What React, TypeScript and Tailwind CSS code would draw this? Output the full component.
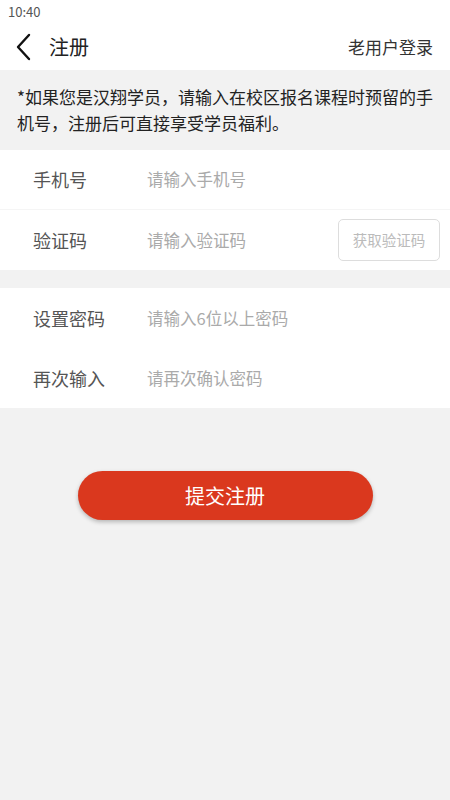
import React from "react";

const font = { fontFamily: '"Noto Sans CJK SC", "Noto Sans", sans-serif' };

const Row = ({
  label,
  placeholder,
  children,
  border,
}: {
  label: string;
  placeholder: string;
  children?: React.ReactNode;
  border?: boolean;
}) => (
  <div
    className={`flex items-center h-[60px] bg-white pl-[33px] pr-[10px] ${
      border ? "border-b border-[#f5f5f5]" : ""
    }`}
  >
    <span className="w-[114px] shrink-0 text-[18px] text-[#555]">{label}</span>
    <input
      className="flex-1 min-w-0 outline-none text-[16.5px] placeholder:text-[#aaa] bg-transparent"
      placeholder={placeholder}
      style={font}
    />
    {children}
  </div>
);

export default function App() {
  return (
    <div className="w-[450px] h-[800px] bg-[#f2f2f2] flex flex-col" style={font}>
      <div className="bg-white h-[24px] flex items-center pl-[8px] text-[13px] text-[#555]">
        10:40
      </div>
      <div className="bg-white h-[46px] flex items-center justify-between pl-[14px] pr-[17px]">
        <div className="flex items-center">
          <svg width="20" height="28" viewBox="0 0 20 28" fill="none">
            <path d="M15 2 L4 14 L15 26" stroke="#111" strokeWidth="2.4" strokeLinecap="round" strokeLinejoin="round" />
          </svg>
          <span className="ml-[15px] text-[20px] text-[#222]">注册</span>
        </div>
        <span className="text-[17px] text-[#333]">老用户登录</span>
      </div>
      <div className="h-[80px] pl-[17px] pr-[10px] pt-[14px] text-[17px] leading-[26px] text-[#222]">
        *如果您是汉翔学员，请输入在校区报名课程时预留的手机号，注册后可直接享受学员福利。
      </div>
      <Row label="手机号" placeholder="请输入手机号" border />
      <Row label="验证码" placeholder="请输入验证码">
        <button className="w-[102px] h-[42px] shrink-0 border border-[#ddd] rounded-[5px] text-[14.5px] text-[#bbb]">
          获取验证码
        </button>
      </Row>
      <div className="h-[18px]" />
      <Row label="设置密码" placeholder="请输入6位以上密码" />
      <Row label="再次输入" placeholder="请再次确认密码" />
      <div className="flex justify-center pt-[63px]">
        <button className="w-[295px] h-[49px] rounded-full bg-[#da381e] text-white text-[20px] shadow-[0_2px_4px_rgba(0,0,0,0.25)]">
          提交注册
        </button>
      </div>
    </div>
  );
}
